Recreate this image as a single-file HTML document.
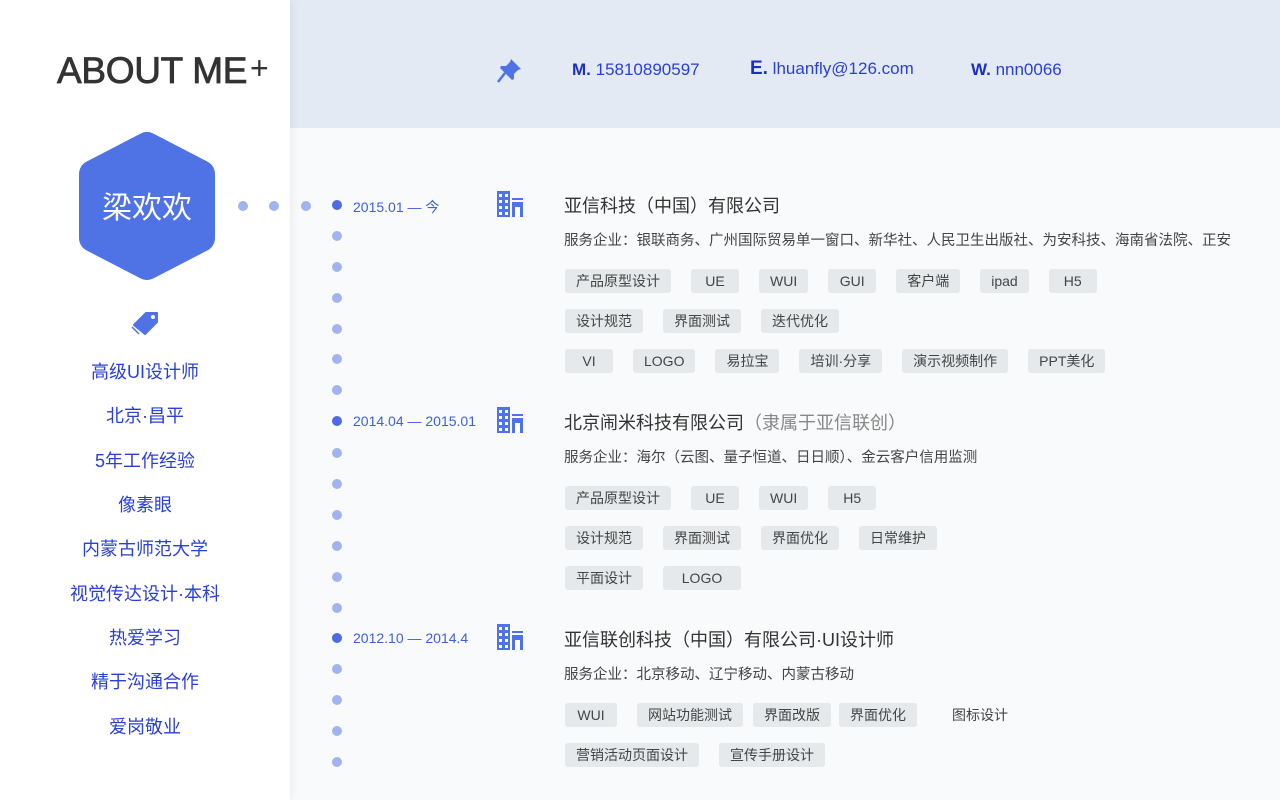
<!DOCTYPE html>
<html><head><meta charset="utf-8"><style>
*{margin:0;padding:0;box-sizing:border-box}
body{width:1280px;height:800px;overflow:hidden;background:#f9fafb;font-family:"Liberation Sans","Noto Sans CJK SC",sans-serif;position:relative}
.side{position:absolute;left:0;top:0;width:290px;height:800px;background:#fff;box-shadow:2px 0 8px rgba(0,0,0,.06);z-index:2}
.head{position:absolute;left:290px;top:0;width:990px;height:128px;background:#e4eaf3}
.title{position:absolute;left:57px;top:50px;font-size:37px;font-weight:normal;color:#333;-webkit-text-stroke:0.8px #333;letter-spacing:-0.3px}
.plus{position:absolute;left:250px;top:50px;font-size:32px;color:#333;font-weight:normal}
.list{position:absolute;left:0;width:290px;text-align:center;font-size:18px;color:#2a3fd6}
.a{position:absolute;font-size:17px;color:#2a3fd6}
.a b{color:#1a2fc4}
.dot{position:absolute;width:10px;height:10px;border-radius:50%;background:#a3b3ee;z-index:3}
.dot.on{background:#4c6be4}
.date{position:absolute;left:353px;font-size:14px;color:#3f5fdc}
.co{position:absolute;left:564px;font-size:18px;color:#333}
.co span{color:#888}
.svc{position:absolute;left:564px;font-size:14.5px;color:#444;white-space:nowrap}
.row{position:absolute;left:565px;display:flex;gap:20px}
.t{height:24px;line-height:24px;padding:0 11px;min-width:48px;text-align:center;background:#e5e9eb;border-radius:3px;font-size:14px;color:#444}
.bld{position:absolute;left:497px}
</style></head><body>
<div class="head"></div>
<div class="side">
<div class="title">ABOUT ME</div><div class="plus">+</div>
<svg style="position:absolute;left:72px;top:126px" width="150" height="160" viewBox="0 0 150 160"><path d="M75 20 L129 48 L129 112 L75 140 L21 112 L21 48 Z" fill="#4f72e4" stroke="#4f72e4" stroke-width="28" stroke-linejoin="round"/><text x="75" y="92" text-anchor="middle" font-size="30" fill="#fff" font-family="Liberation Sans,Noto Sans CJK SC,sans-serif">梁欢欢</text></svg>
<svg style="position:absolute;left:131px;top:310px" width="30" height="26" viewBox="0 0 30 26"><path d="M3 15 L15 3 L26 3 L26 12 L14 24 Z" fill="#4f72e4" stroke="#4f72e4" stroke-linejoin="round" stroke-width="2"/><circle cx="22" cy="7" r="2" fill="#fff"/><path d="M1 17 L8 24" stroke="#4f72e4" stroke-width="1.5" fill="none"/></svg>
<div class="list" style="top:358px">高级UI设计师</div>
<div class="list" style="top:402px">北京·昌平</div>
<div class="list" style="top:447px">5年工作经验</div>
<div class="list" style="top:491px">像素眼</div>
<div class="list" style="top:535px">内蒙古师范大学</div>
<div class="list" style="top:580px">视觉传达设计·本科</div>
<div class="list" style="top:624px">热爱学习</div>
<div class="list" style="top:668px">精于沟通合作</div>
<div class="list" style="top:713px">爱岗敬业</div>
</div>
<svg style="position:absolute;left:496px;top:56px" width="28" height="28" viewBox="0 0 28 28"><path d="M15 3 L25 13 L22 14 L18 18 L18 23 L16 24 L4 12 L5 10 L10 10 L14 6 Z" fill="#4f72e4"/><path d="M9 17 L2 26" stroke="#4f72e4" stroke-width="2.5"/></svg>
<div class="a" style="left:572px;top:60px"><b>M.</b> 15810890597</div>
<div class="a" style="left:750px;top:58px"><b style="font-size:19px">E.</b> lhuanfly@126.com</div>
<div class="a" style="left:971px;top:60px"><b>W.</b> nnn0066</div>
<div class="dot" style="left:238px;top:201px"></div><div class="dot" style="left:269px;top:201px"></div><div class="dot" style="left:301px;top:201px"></div>
<div class="dot on" style="left:332px;top:200px"></div><div class="dot" style="left:332px;top:231px"></div><div class="dot" style="left:332px;top:262px"></div><div class="dot" style="left:332px;top:293px"></div><div class="dot" style="left:332px;top:324px"></div><div class="dot" style="left:332px;top:354px"></div><div class="dot" style="left:332px;top:385px"></div>
<div class="dot on" style="left:332px;top:416px"></div><div class="dot" style="left:332px;top:448px"></div><div class="dot" style="left:332px;top:479px"></div><div class="dot" style="left:332px;top:510px"></div><div class="dot" style="left:332px;top:541px"></div><div class="dot" style="left:332px;top:572px"></div><div class="dot" style="left:332px;top:603px"></div>
<div class="dot on" style="left:332px;top:633px"></div><div class="dot" style="left:332px;top:664px"></div><div class="dot" style="left:332px;top:695px"></div><div class="dot" style="left:332px;top:726px"></div><div class="dot" style="left:332px;top:757px"></div>
<div class="date" style="top:197px">2015.01 — 今</div>
<div class="date" style="top:413px">2014.04 — 2015.01</div>
<div class="date" style="top:630px">2012.10 — 2014.4</div>
<svg class="bld" style="top:191px" width="27" height="26" viewBox="0 0 27 26"><rect x="0" y="0" width="13" height="26" fill="#4f72e4"/><g fill="#fff"><rect x="2" y="3" width="3" height="3"/><rect x="8" y="3" width="3" height="3"/><rect x="2" y="9" width="3" height="3"/><rect x="8" y="9" width="3" height="3"/><rect x="2" y="15" width="3" height="3"/><rect x="8" y="15" width="3" height="3"/><rect x="2" y="21" width="3" height="3"/><rect x="8" y="21" width="3" height="3"/></g><rect x="15" y="7" width="11" height="2" fill="#4f72e4"/><rect x="15" y="11" width="11" height="15" fill="#4f72e4"/><rect x="18" y="16" width="5" height="10" fill="#fff"/></svg>
<svg class="bld" style="top:407px" width="27" height="26" viewBox="0 0 27 26"><rect x="0" y="0" width="13" height="26" fill="#4f72e4"/><g fill="#fff"><rect x="2" y="3" width="3" height="3"/><rect x="8" y="3" width="3" height="3"/><rect x="2" y="9" width="3" height="3"/><rect x="8" y="9" width="3" height="3"/><rect x="2" y="15" width="3" height="3"/><rect x="8" y="15" width="3" height="3"/><rect x="2" y="21" width="3" height="3"/><rect x="8" y="21" width="3" height="3"/></g><rect x="15" y="7" width="11" height="2" fill="#4f72e4"/><rect x="15" y="11" width="11" height="15" fill="#4f72e4"/><rect x="18" y="16" width="5" height="10" fill="#fff"/></svg>
<svg class="bld" style="top:624px" width="27" height="26" viewBox="0 0 27 26"><rect x="0" y="0" width="13" height="26" fill="#4f72e4"/><g fill="#fff"><rect x="2" y="3" width="3" height="3"/><rect x="8" y="3" width="3" height="3"/><rect x="2" y="9" width="3" height="3"/><rect x="8" y="9" width="3" height="3"/><rect x="2" y="15" width="3" height="3"/><rect x="8" y="15" width="3" height="3"/><rect x="2" y="21" width="3" height="3"/><rect x="8" y="21" width="3" height="3"/></g><rect x="15" y="7" width="11" height="2" fill="#4f72e4"/><rect x="15" y="11" width="11" height="15" fill="#4f72e4"/><rect x="18" y="16" width="5" height="10" fill="#fff"/></svg>

<div class="co" style="top:192px">亚信科技（中国）有限公司</div>
<div class="svc" style="top:229px">服务企业：银联商务、广州国际贸易单一窗口、新华社、人民卫生出版社、为安科技、海南省法院、正安</div>
<div class="row" style="top:269px"><div class="t">产品原型设计</div><div class="t">UE</div><div class="t">WUI</div><div class="t">GUI</div><div class="t">客户端</div><div class="t">ipad</div><div class="t">H5</div></div>
<div class="row" style="top:309px"><div class="t">设计规范</div><div class="t">界面测试</div><div class="t">迭代优化</div></div>
<div class="row" style="top:349px"><div class="t">VI</div><div class="t">LOGO</div><div class="t">易拉宝</div><div class="t">培训·分享</div><div class="t">演示视频制作</div><div class="t">PPT美化</div></div>

<div class="co" style="top:409px">北京闹米科技有限公司<span>（隶属于亚信联创）</span></div>
<div class="svc" style="top:446px">服务企业：海尔（云图、量子恒道、日日顺）、金云客户信用监测</div>
<div class="row" style="top:486px"><div class="t">产品原型设计</div><div class="t">UE</div><div class="t">WUI</div><div class="t">H5</div></div>
<div class="row" style="top:526px"><div class="t">设计规范</div><div class="t">界面测试</div><div class="t">界面优化</div><div class="t">日常维护</div></div>
<div class="row" style="top:566px"><div class="t">平面设计</div><div class="t" style="min-width:78px">LOGO</div></div>

<div class="co" style="top:626px">亚信联创科技（中国）有限公司·UI设计师</div>
<div class="svc" style="top:663px">服务企业：北京移动、辽宁移动、内蒙古移动</div>
<div class="row" style="top:703px;gap:10px"><div class="t" style="min-width:52px">WUI</div><div class="t" style="margin-left:10px">网站功能测试</div><div class="t">界面改版</div><div class="t" style="margin-left:-2px">界面优化</div><div class="t" style="background:none;margin-left:14px">图标设计</div></div>
<div class="row" style="top:743px"><div class="t">营销活动页面设计</div><div class="t">宣传手册设计</div></div>
</body></html>
